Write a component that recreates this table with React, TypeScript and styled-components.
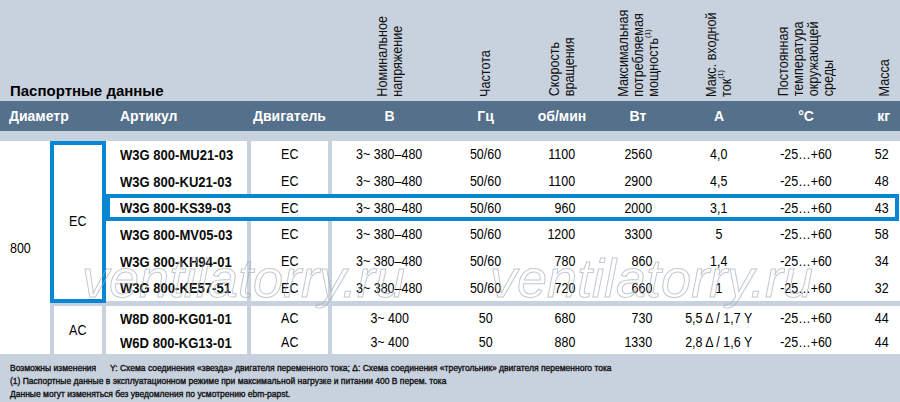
import React from "react";
import styled, { createGlobalStyle } from "styled-components";

const SANS = `"Liberation Sans", Arial, sans-serif`;
const BG = "#c8d2de";
const BLUE = "#0886d6";

type Align = "center" | "right";

interface Col {
  w: number;
  align: Align;
  pad: number;
  unit: string;
  unitPad?: number;
  head: React.ReactNode;
  headPad?: number;
}

const cols: Col[] = [
  { w: 115, align: "center", pad: 0, unit: "В", head: <>Номинальное<br />напряжение</> },
  { w: 77, align: "center", pad: 0, unit: "Гц", head: <>Частота</> },
  { w: 76, align: "right", pad: 25, unit: "об/мин", head: <>Скорость<br />вращения</> },
  { w: 76, align: "right", pad: 24, unit: "Вт", head: <>Максимальная<br />потребляемая<br />мощность<sup>(1)</sup></> },
  { w: 86, align: "center", pad: 0, unit: "А", head: <>Макс. входной<br />ток<sup>(1)</sup></> },
  { w: 88, align: "center", pad: 0, unit: "°C", head: <>Постоянная<br />температура<br />окружающей<br />среды</> },
  { w: 50, align: "right", pad: 11, unit: "кг", unitPad: 10, head: <>Масса</>, headPad: 8 },
];

const restTemplate = cols.map((c) => `${c.w}px`).join(" ");

interface Item {
  article: string;
  motor: string;
  values: string[];
  marked?: boolean;
}

const ecRows: Item[] = [
  { article: "W3G 800-MU21-03", motor: "EC", values: ["3~ 380–480", "50/60", "1100", "2560", "4,0", "-25…+60", "52"] },
  { article: "W3G 800-KU21-03", motor: "EC", values: ["3~ 380–480", "50/60", "1100", "2900", "4,5", "-25…+60", "48"] },
  { article: "W3G 800-KS39-03", motor: "EC", values: ["3~ 380–480", "50/60", "960", "2000", "3,1", "-25…+60", "43"], marked: true },
  { article: "W3G 800-MV05-03", motor: "EC", values: ["3~ 380–480", "50/60", "1200", "3300", "5", "-25…+60", "58"] },
  { article: "W3G 800-KH94-01", motor: "EC", values: ["3~ 380–480", "50/60", "780", "860", "1,4", "-25…+60", "34"] },
  { article: "W3G 800-KE57-51", motor: "EC", values: ["3~ 380–480", "50/60", "720", "660", "1", "-25…+60", "32"] },
];

const acRows: Item[] = [
  { article: "W8D 800-KG01-01", motor: "AC", values: ["3~ 400", "50", "680", "730", "5,5 Δ / 1,7 Y", "-25…+60", "44"] },
  { article: "W6D 800-KG13-01", motor: "AC", values: ["3~ 400", "50", "880", "1330", "2,8 Δ / 1,6 Y", "-25…+60", "44"] },
];

const GlobalStyle = createGlobalStyle`
  html, body {
    margin: 0;
    padding: 0;
    background: ${BG};
  }
  body {
    font-family: ${SANS};
  }
`;

const Page = styled.div`
  position: relative;
  width: 900px;
  height: 402px;
  overflow: hidden;
  background: ${BG};
  display: flex;
  flex-direction: column;
`;

/* condensed look: no narrow face is installed, so squeeze the glyphs */
const Narrow = styled.span<{ $origin?: string; $k?: number }>`
  display: inline-block;
  white-space: nowrap;
  transform: scaleX(${(p) => p.$k ?? 0.89});
  transform-origin: ${(p) => p.$origin ?? "center"};
`;

/* top area with title and rotated column names */
const Top = styled.div`
  height: 101px;
  flex: none;
  display: grid;
  grid-template-columns: 332px ${restTemplate};
`;

const Title = styled.h1`
  margin: 0;
  align-self: end;
  padding: 0 0 7px 10px;
  font: bold 15px/17px ${SANS};
  color: #000;
  white-space: nowrap;
`;

const RotCell = styled.div<{ $align: Align; $pad: number }>`
  display: flex;
  align-items: flex-end;
  justify-content: ${(p) => (p.$align === "right" ? "flex-end" : "center")};
  padding: 0 ${(p) => p.$pad}px 9px 0;
`;

const RotSqueeze = styled.div`
  transform: scaleY(0.9);
  transform-origin: bottom;
`;

const RotText = styled.div`
  writing-mode: vertical-rl;
  transform: rotate(180deg);
  font: 14px/15px ${SANS};
  color: #111;
  white-space: nowrap;

  sup {
    font-size: 8px;
    line-height: 0;
    vertical-align: 5px;
  }
`;

/* dark header bar */
const Bar = styled.div`
  height: 30px;
  flex: none;
  background: #54708a;
  display: grid;
  grid-template-columns: 106px 145px 81px ${restTemplate};
  font: bold 14px/30px ${SANS};
  color: #fff;
`;

const BarLabel = styled.div<{ $align: "left" | Align; $padL?: number; $padR?: number }>`
  text-align: ${(p) => p.$align};
  padding-left: ${(p) => p.$padL ?? 0}px;
  padding-right: ${(p) => p.$padR ?? 0}px;
  white-space: nowrap;
`;

const Strip = styled.div`
  height: 10px;
  flex: none;
`;

/* table body */
const Body = styled.div`
  height: 213px;
  flex: none;
  display: flex;
  gap: 4px;
  font: 14px ${SANS};
  color: #000;
`;

const Diameter = styled.div`
  width: 50px;
  flex: none;
  background: #fff;
  display: flex;
  align-items: center;
  padding-left: 10px;
  box-sizing: border-box;
`;

const Groups = styled.div`
  flex: 1;
  display: flex;
  flex-direction: column;
  gap: 5px;
`;

const Group = styled.div<{ $h: number }>`
  height: ${(p) => p.$h}px;
  display: flex;
  gap: 4px;
`;

const TypeCell = styled.div<{ $boxed?: boolean }>`
  position: relative;
  width: 48px;
  flex: none;
  background: #fff;
  display: flex;
  align-items: center;
  justify-content: center;

  &::after {
    content: "";
    display: ${(p) => (p.$boxed ? "block" : "none")};
    position: absolute;
    top: 0;
    left: -4px;
    right: -4px;
    bottom: -2px;
    border: 4px solid ${BLUE};
  }
`;

const Rows = styled.div`
  flex: 1;
  display: flex;
  flex-direction: column;
`;

const Row = styled.div<{ $marked?: boolean }>`
  position: relative;
  flex: 1;
  display: grid;
  grid-template-columns: 145px 81px ${restTemplate};
  background: #fff;

  &::after {
    content: "";
    display: ${(p) => (p.$marked ? "block" : "none")};
    position: absolute;
    inset: 0 1px 0 0;
    border: 4px solid ${BLUE};
  }
`;

const Article = styled.div<{ $marked?: boolean }>`
  display: flex;
  align-items: center;
  padding-left: 14px;
  border-right: 4px solid ${(p) => (p.$marked ? "#fff" : BG)};
  font: bold 15px ${SANS};
  color: #0c0c0c;
  overflow: visible;
`;

const Motor = styled.div<{ $marked?: boolean }>`
  display: flex;
  align-items: center;
  justify-content: center;
  border-right: 4px solid ${(p) => (p.$marked ? "#fff" : BG)};
`;

const Value = styled.div<{ $align: Align; $pad: number }>`
  display: flex;
  align-items: center;
  justify-content: ${(p) => (p.$align === "right" ? "flex-end" : "center")};
  padding-right: ${(p) => p.$pad}px;
`;

/* notes */
const Notes = styled.div`
  flex: 1;
  padding: 8px 10px 0;
  font: 8.5px/13px ${SANS};
  color: #111;
  -webkit-text-stroke: 0.35px #111;
  white-space: nowrap;
`;

const NoteLabel = styled.span`
  display: inline-block;
  width: 100px;
`;

const Watermark = styled.div<{ $left: number }>`
  position: absolute;
  top: 251px;
  left: ${(p) => p.$left}px;
  font: italic 54px/54px ${SANS};
  color: transparent;
  -webkit-text-stroke: 1px rgba(160, 170, 182, 0.65);
  pointer-events: none;
  white-space: nowrap;
`;

const TableRow = ({ item }: { item: Item }) => (
  <Row $marked={item.marked}>
    <Article $marked={item.marked}>
      <Narrow $origin="left" $k={0.87}>{item.article}</Narrow>
    </Article>
    <Motor $marked={item.marked}>
      <Narrow>{item.motor}</Narrow>
    </Motor>
    {item.values.map((v, i) => (
      <Value key={i} $align={cols[i].align} $pad={cols[i].pad}>
        <Narrow $origin={cols[i].align === "right" ? "right" : "center"}>{v}</Narrow>
      </Value>
    ))}
  </Row>
);

export default function App() {
  return (
    <Page>
      <GlobalStyle />
      <Top>
        <Title>Паспортные данные</Title>
        {cols.map((c, i) => (
          <RotCell key={i} $align={c.headPad ? "right" : "center"} $pad={c.headPad ?? 0}>
            <RotSqueeze>
              <RotText>{c.head}</RotText>
            </RotSqueeze>
          </RotCell>
        ))}
      </Top>
      <Bar>
        <BarLabel $align="left" $padL={9}>Диаметр</BarLabel>
        <BarLabel $align="left" $padL={14}>Артикул</BarLabel>
        <BarLabel $align="center" $padR={4}>Двигатель</BarLabel>
        {cols.map((c, i) => (
          <BarLabel key={i} $align={c.unitPad ? "right" : "center"} $padR={c.unitPad ?? 0}>
            {c.unit}
          </BarLabel>
        ))}
      </Bar>
      <Strip />
      <Body>
        <Diameter>
          <Narrow $origin="left">800</Narrow>
        </Diameter>
        <Groups>
          <Group $h={160}>
            <TypeCell $boxed>
              <Narrow>EC</Narrow>
            </TypeCell>
            <Rows>
              {ecRows.map((r) => (
                <TableRow key={r.article} item={r} />
              ))}
            </Rows>
          </Group>
          <Group $h={48}>
            <TypeCell>
              <Narrow>AC</Narrow>
            </TypeCell>
            <Rows>
              {acRows.map((r) => (
                <TableRow key={r.article} item={r} />
              ))}
            </Rows>
          </Group>
        </Groups>
      </Body>
      <Notes>
        <div>
          <NoteLabel>Возможны изменения</NoteLabel>
          Y: Схема соединения «звезда» двигателя переменного тока; Δ: Схема соединения «треугольник» двигателя переменного тока
        </div>
        <div>(1) Паспортные данные в эксплуатационном режиме при максимальной нагрузке и питании 400 В перем. тока</div>
        <div>Данные могут изменяться без уведомления по усмотрению ebm-papst.</div>
      </Notes>
      <Watermark $left={82}>ventilatorry.ru</Watermark>
      <Watermark $left={490}>ventilatorry.ru</Watermark>
    </Page>
  );
}
